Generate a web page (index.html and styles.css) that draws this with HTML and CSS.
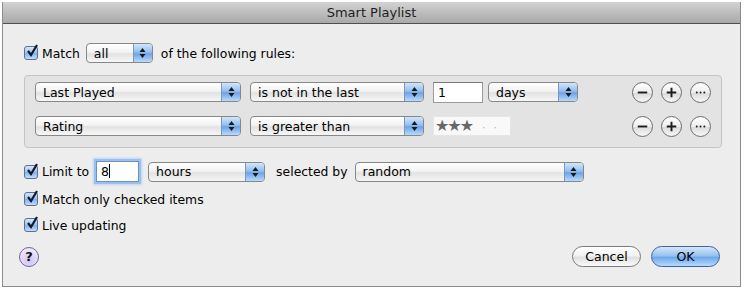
FILE: index.html
```html
<!DOCTYPE html>
<html lang="en">
<head>
    <meta charset="UTF-8">
    <title>Smart Playlist</title>
    <link rel="stylesheet" href="styles.css">
</head>
<body>
    <div class="window">
        <div class="titlebar">Smart Playlist</div>
        <div class="content">
            <div class="match-row">
                <span class="checkbox"><svg viewBox="0 0 14 14"><path d="M3 7 L6 11 L12 1" /></svg></span>
                <span class="label">Match</span>
                <div class="popup w-all"><span>all</span><span class="arrows"><svg viewBox="0 0 7 12"><path d="M3.5 1 L6.5 5 L0.5 5 Z M3.5 11 L6.5 7 L0.5 7 Z" /></svg></span></div>
                <span class="label">of the following rules:</span>
            </div>

            <div class="rules">
                <div class="rule">
                    <div class="popup w-field"><span>Last Played</span><span class="arrows"><svg viewBox="0 0 7 12"><path d="M3.5 1 L6.5 5 L0.5 5 Z M3.5 11 L6.5 7 L0.5 7 Z" /></svg></span></div>
                    <div class="popup w-op"><span>is not in the last</span><span class="arrows"><svg viewBox="0 0 7 12"><path d="M3.5 1 L6.5 5 L0.5 5 Z M3.5 11 L6.5 7 L0.5 7 Z" /></svg></span></div>
                    <div class="textfield w-num">1</div>
                    <div class="popup w-unit"><span>days</span><span class="arrows"><svg viewBox="0 0 7 12"><path d="M3.5 1 L6.5 5 L0.5 5 Z M3.5 11 L6.5 7 L0.5 7 Z" /></svg></span></div>
                    <div class="rule-buttons">
                        <span class="round-btn"><svg viewBox="0 0 20 20"><path d="M5 10 H15" /></svg></span>
                        <span class="round-btn"><svg viewBox="0 0 20 20"><path d="M5 10 H15 M10 5 V15" /></svg></span>
                        <span class="round-btn"><svg viewBox="0 0 20 20"><path class="dot" d="M6 10 h0.1 M10 10 h0.1 M14 10 h0.1" /></svg></span>
                    </div>
                </div>
                <div class="rule">
                    <div class="popup w-field"><span>Rating</span><span class="arrows"><svg viewBox="0 0 7 12"><path d="M3.5 1 L6.5 5 L0.5 5 Z M3.5 11 L6.5 7 L0.5 7 Z" /></svg></span></div>
                    <div class="popup w-op"><span>is greater than</span><span class="arrows"><svg viewBox="0 0 7 12"><path d="M3.5 1 L6.5 5 L0.5 5 Z M3.5 11 L6.5 7 L0.5 7 Z" /></svg></span></div>
                    <div class="stars">★★★<span class="dot">·</span><span class="dot">·</span></div>
                    <div class="rule-buttons">
                        <span class="round-btn"><svg viewBox="0 0 20 20"><path d="M5 10 H15" /></svg></span>
                        <span class="round-btn"><svg viewBox="0 0 20 20"><path d="M5 10 H15 M10 5 V15" /></svg></span>
                        <span class="round-btn"><svg viewBox="0 0 20 20"><path class="dot" d="M6 10 h0.1 M10 10 h0.1 M14 10 h0.1" /></svg></span>
                    </div>
                </div>
            </div>

            <div class="limit-row">
                <span class="checkbox"><svg viewBox="0 0 14 14"><path d="M3 7 L6 11 L12 1" /></svg></span>
                <span class="label">Limit to</span>
                <div class="textfield focused w-limit">8<span class="caret"></span></div>
                <div class="popup w-hours"><span>hours</span><span class="arrows"><svg viewBox="0 0 7 12"><path d="M3.5 1 L6.5 5 L0.5 5 Z M3.5 11 L6.5 7 L0.5 7 Z" /></svg></span></div>
                <span class="label sel">selected by</span>
                <div class="popup w-random"><span>random</span><span class="arrows"><svg viewBox="0 0 7 12"><path d="M3.5 1 L6.5 5 L0.5 5 Z M3.5 11 L6.5 7 L0.5 7 Z" /></svg></span></div>
            </div>

            <div class="check-row first">
                <span class="checkbox"><svg viewBox="0 0 14 14"><path d="M3 7 L6 11 L12 1" /></svg></span>
                <span class="label">Match only checked items</span>
            </div>
            <div class="check-row">
                <span class="checkbox"><svg viewBox="0 0 14 14"><path d="M3 7 L6 11 L12 1" /></svg></span>
                <span class="label">Live updating</span>
            </div>

            <div class="footer">
                <span class="help">?</span>
                <div class="buttons">
                    <span class="push">Cancel</span>
                    <span class="push default">OK</span>
                </div>
            </div>
        </div>
    </div>
</body>
</html>
```

FILE: styles.css
```css
body {
    margin: 0;
    background: #ffffff;
    font-family: "DejaVu Sans", sans-serif;
    font-size: 12.4px;
    color: #000;
}
.window {
    margin: 2px 3px 0 2px;
    height: 285px;
    background: #ededed;
    border: 1px solid #8c8c8c;
    border-top: none;
    box-sizing: border-box;
    display: flex;
    flex-direction: column;
}
.titlebar {
    height: 21px;
    line-height: 21px;
    text-align: center;
    font-size: 13px;
    color: #1e1e1e;
    background: linear-gradient(#d3d3d3, #bdbdbd 50%, #a9a9a9);
    border-bottom: 1px solid #4f4f4f;
}
.content {
    flex: 1;
    padding: 19px 20px 0 21px;
    display: flex;
    flex-direction: column;
}
.label {
    white-space: nowrap;
}
.checkbox {
    width: 14px;
    height: 14px;
    box-sizing: border-box;
    border: 1px solid #5b6f96;
    border-radius: 3px;
    background: linear-gradient(#d8e6f7, #9fc2ec 50%, #82b0e8 51%, #c3defb);
    margin-right: 4px;
    display: inline-flex;
    flex-shrink: 0;
}
.checkbox svg {
    width: 14px;
    height: 14px;
    margin: -3px 0 0 0;
    overflow: visible;
}
.checkbox path {
    fill: none;
    stroke: #101a33;
    stroke-width: 2.2;
}
.match-row {
    display: flex;
    align-items: center;
    height: 20px;
}
.match-row .popup {
    margin: 0 8px 0 6px;
}
.popup {
    height: 20px;
    box-sizing: border-box;
    border: 1px solid #878787;
    border-radius: 4px;
    background: linear-gradient(#ffffff, #f3f3f3 45%, #e2e2e2 55%, #f7f7f7);
    display: flex;
    align-items: center;
    padding-left: 7px;
    font-size: 12.5px;
    white-space: nowrap;
    flex-shrink: 0;
}
.popup .arrows {
    margin-left: auto;
    width: 18px;
    height: 18px;
    border-left: 1px solid #7c96c4;
    border-radius: 0 3px 3px 0;
    background: linear-gradient(#d3e5f9, #93bff0 45%, #6ca4e7 55%, #b8dafd);
    display: flex;
    align-items: center;
    justify-content: center;
}
.popup .arrows svg {
    width: 7px;
    height: 12px;
}
.popup .arrows path {
    fill: #1a1a1a;
}
.w-all { width: 67px; }
.w-field { width: 206px; }
.w-op { width: 174px; margin-left: 9px; }
.w-unit { width: 90px; margin-left: 5px; }
.w-hours { width: 117px; margin-left: 9px; }
.w-random { width: 229px; margin-left: 7px; }

.rules {
    margin: 12px 0 0 0;
    width: 698px;
    height: 73px;
    box-sizing: border-box;
    border: 1px solid #c4c4c4;
    border-radius: 4px;
    background: #e3e3e3;
    padding: 6px 10px 0 10px;
    display: flex;
    flex-direction: column;
    gap: 14px;
}
.rule {
    display: flex;
    align-items: center;
    height: 20px;
}
.textfield {
    height: 21px;
    box-sizing: border-box;
    border: 1px solid #9b9b9b;
    border-top-color: #7a7a7a;
    background: #fff;
    padding-left: 4px;
    font-size: 12.5px;
    line-height: 19px;
    flex-shrink: 0;
}
.w-num { width: 50px; margin-left: 9px; }
.w-limit { width: 43px; margin-left: 7px; }
.focused {
    box-shadow: 0 0 0 2px #9ac0ee, 0 0 2px 3px #bcd5f3;
    border-color: #6d8fc4;
}
.caret {
    display: inline-block;
    width: 1px;
    height: 14px;
    background: #000;
    vertical-align: -2px;
}
.stars {
    width: 78px;
    height: 20px;
    margin-left: 9px;
    background: #f9f9f9;
    border: 1px solid #e6e6e6;
    box-sizing: border-box;
    color: #676767;
    font-size: 16px;
    line-height: 18px;
    padding-left: 1px;
    letter-spacing: -2px;
}
.stars .dot {
    color: #b5b5b5;
    font-size: 11px;
    margin-left: 10px;
}
.rule-buttons {
    margin-left: auto;
    display: flex;
    gap: 8px;
}
.round-btn {
    width: 21px;
    height: 21px;
    box-sizing: border-box;
    border: 1px solid #6d6d6d;
    border-radius: 50%;
    background: linear-gradient(#ffffff, #eeeeee 50%, #dcdcdc 55%, #f8f8f8);
    display: flex;
}
.round-btn svg {
    width: 19px;
    height: 19px;
}
.round-btn path {
    stroke: #1c1c1c;
    stroke-width: 2;
    fill: none;
}
.round-btn path.dot {
    stroke-width: 2;
    stroke-linecap: round;
}
.limit-row {
    display: flex;
    align-items: center;
    height: 21px;
    margin-top: 13px;
}
.sel {
    margin-left: 11px;
}
.check-row {
    display: flex;
    align-items: center;
    height: 16px;
}
.check-row.first {
    margin-top: 9px;
}
.check-row + .check-row {
    margin-top: 10px;
}
.footer {
    display: flex;
    align-items: center;
    margin-top: 13px;
    margin-left: -5px;
}
.help {
    width: 20px;
    height: 20px;
    box-sizing: border-box;
    border: 1px solid #6f63a0;
    border-radius: 50%;
    background: radial-gradient(circle at 50% 70%, #cfc2f4, #e7e1fb 60%, #f3f0ff);
    font-weight: bold;
    font-size: 13px;
    display: flex;
    align-items: center;
    justify-content: center;
    color: #111;
}
.buttons {
    margin-left: auto;
    display: flex;
    gap: 10px;
}
.push {
    width: 69px;
    height: 21px;
    box-sizing: border-box;
    border: 1px solid #7a7a7a;
    border-radius: 11px;
    background: linear-gradient(#ffffff, #f2f2f2 45%, #e0e0e0 55%, #fafafa);
    text-align: center;
    line-height: 19px;
    font-size: 12.5px;
}
.push.default {
    border-color: #41609e;
    background: linear-gradient(#d6e7fa, #98c2f0 45%, #6fa8ea 55%, #b5dbff);
}
```
